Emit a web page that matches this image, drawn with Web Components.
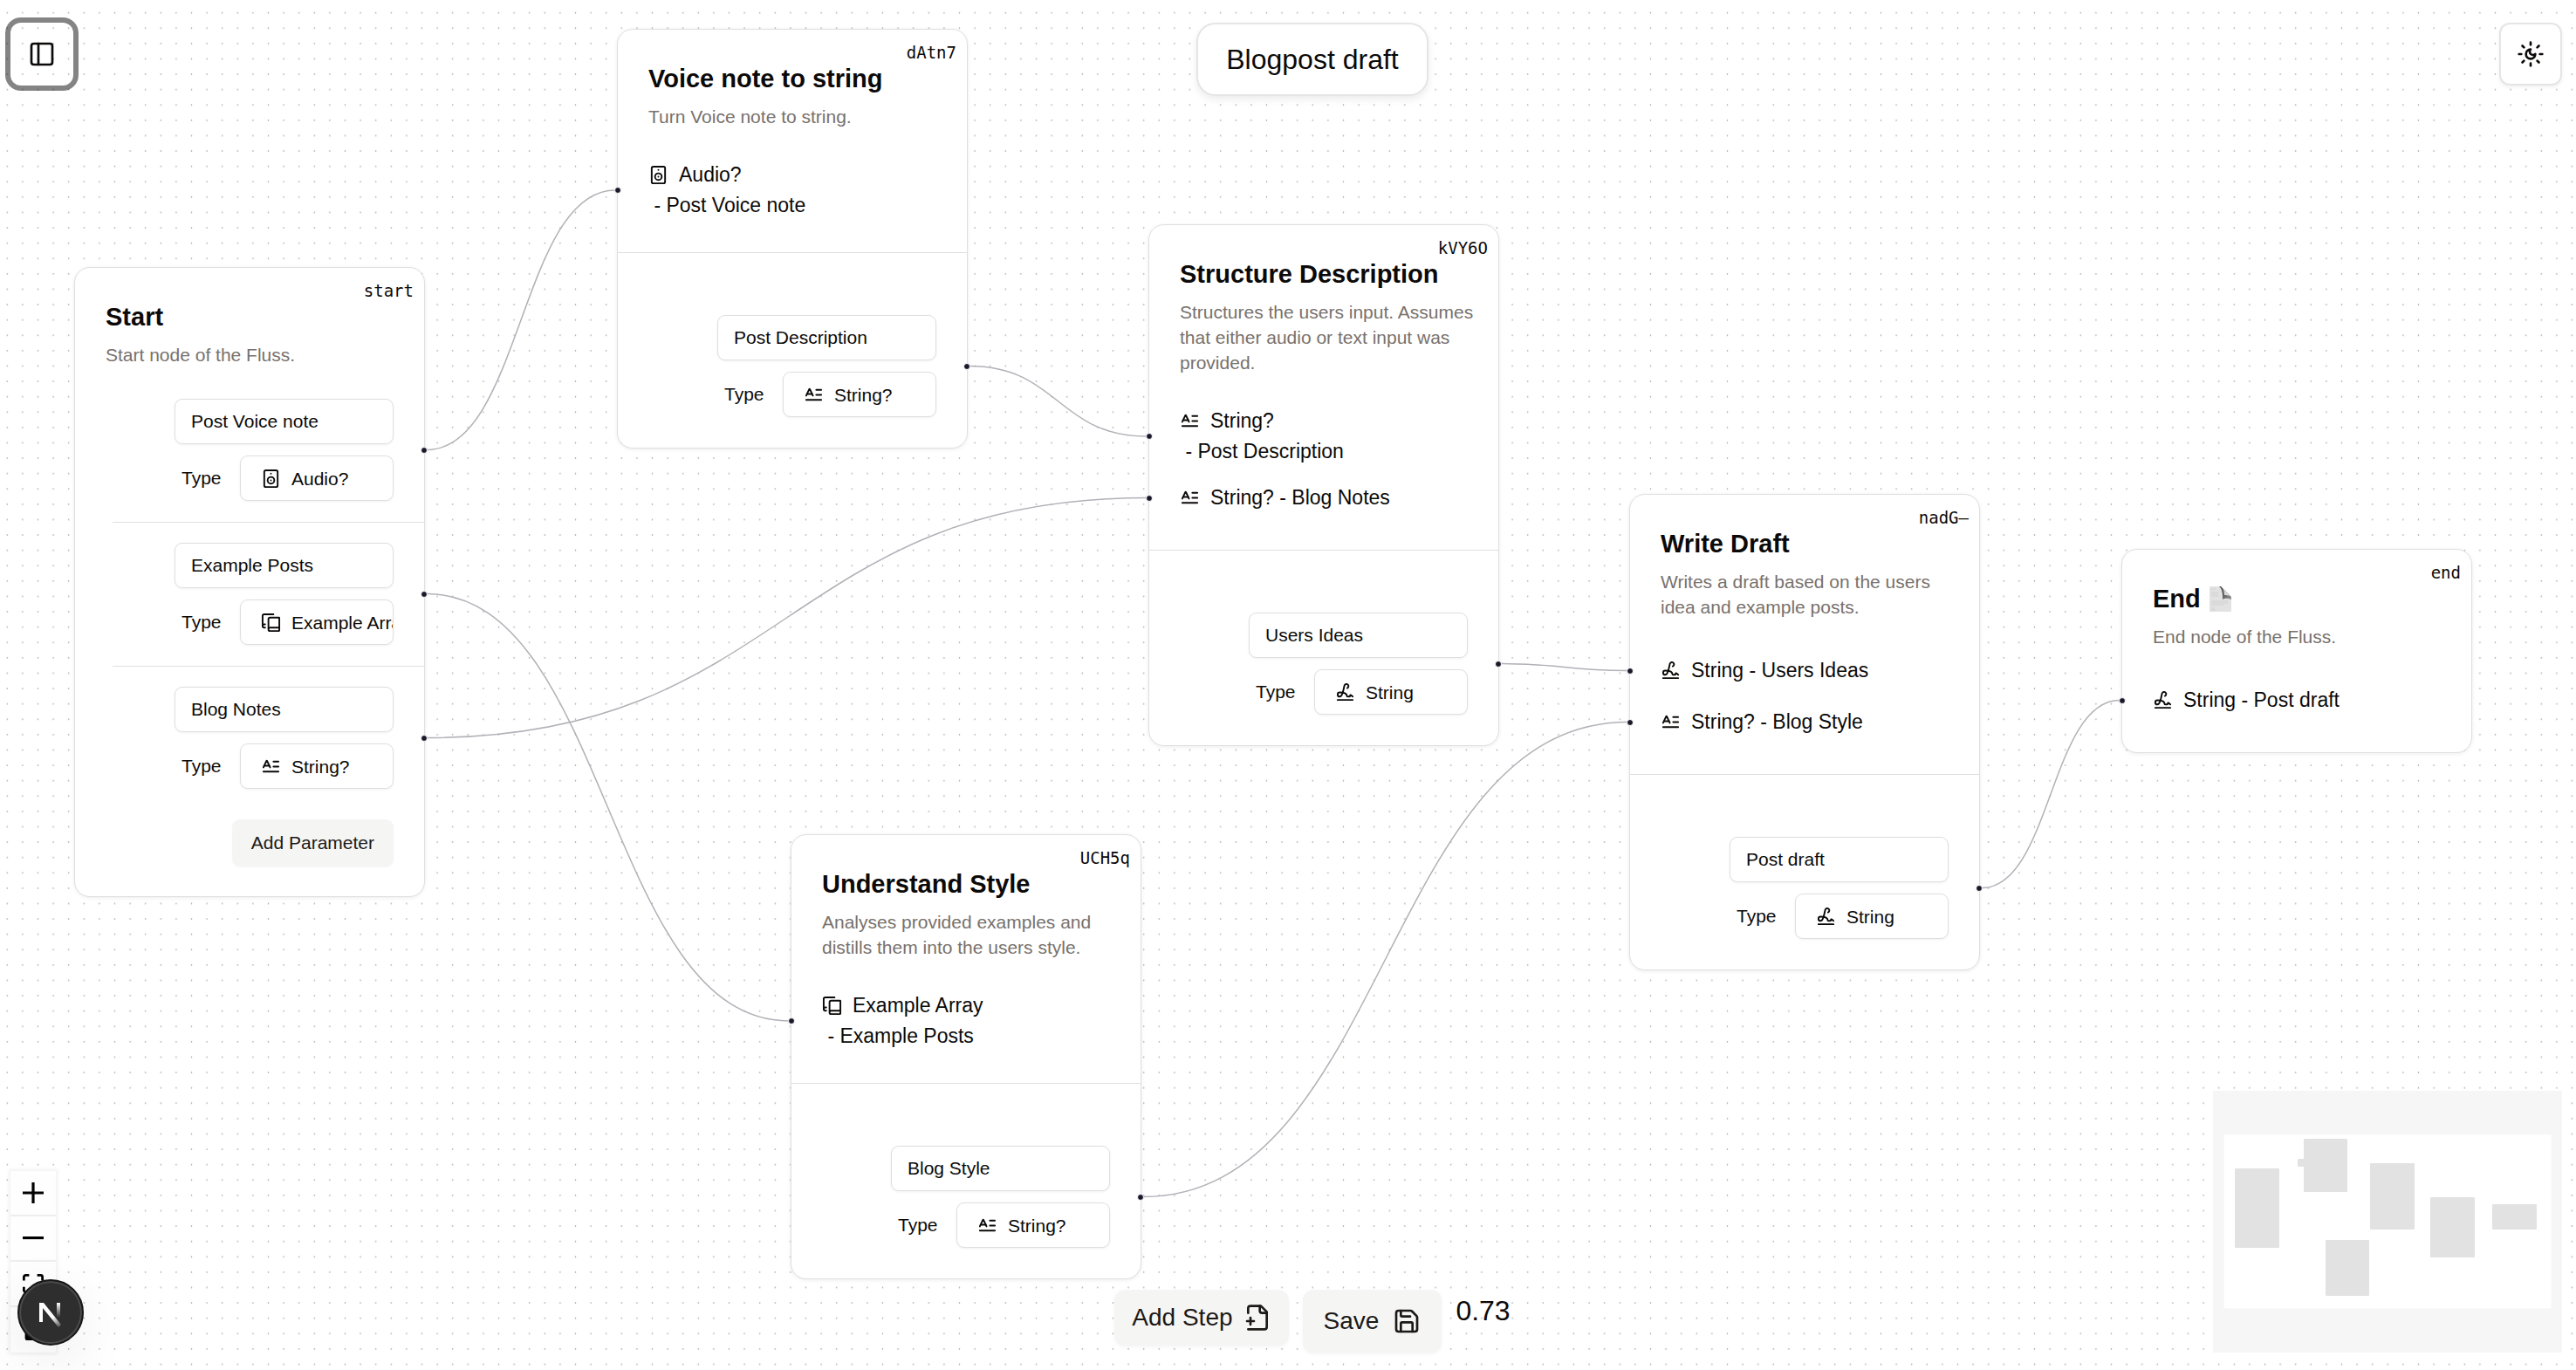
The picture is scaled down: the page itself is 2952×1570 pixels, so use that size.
<!DOCTYPE html>
<html lang="en">
<head>
<meta charset="utf-8">
<title>Blogpost draft</title>
<style>
  :root {
    --ink: #0c0a09;
    --muted: #78716c;
    --line: #e5e5e5;
    --hairline: #dfdfdf;
    --soft: #f5f5f4;
    --mono: "DejaVu Sans Mono", monospace;
  }
  html, body { height: 100%; margin: 0; }
  body {
    font-family: "Liberation Sans", Arial, sans-serif;
    color: var(--ink);
    background: #fff;
    overflow: hidden;
  }
</style>
</head>
<body>
<flow-app>
  <flow-edges slot="canvas"></flow-edges>

  <flow-node slot="canvas" x="85" y="306" name="Start" code="start">
    Start node of the Fluss.
    <flow-output slot="outputs" id="start-voice" name="Post Voice note" type="Audio?" icon="speaker"></flow-output>
    <flow-output slot="outputs" id="start-posts" name="Example Posts" type="Example Array" icon="array"></flow-output>
    <flow-output slot="outputs" id="start-notes" name="Blog Notes" type="String?" icon="text"></flow-output>
    <flow-add slot="footer">Add Parameter</flow-add>
  </flow-node>

  <flow-node slot="canvas" x="707" y="33" name="Voice note to string" code="dAtn7">
    Turn Voice note to string.
    <flow-param slot="inputs" id="voice-in" stacked type="Audio?" name="Post Voice note" icon="speaker"></flow-param>
    <flow-output slot="outputs" id="voice-out" name="Post Description" type="String?" icon="text"></flow-output>
  </flow-node>

  <flow-node slot="canvas" x="1316" y="257" name="Structure Description" code="kVY6O">
    Structures the users input. Assumes that either audio or text input was provided.
    <flow-param slot="inputs" id="structure-desc" stacked type="String?" name="Post Description" icon="text"></flow-param>
    <flow-param slot="inputs" id="structure-notes" type="String?" name="Blog Notes" icon="text"></flow-param>
    <flow-output slot="outputs" id="structure-out" name="Users Ideas" type="String" icon="signature"></flow-output>
  </flow-node>

  <flow-node slot="canvas" x="906" y="956" name="Understand Style" code="UCH5q">
    Analyses provided examples and distills them into the users style.
    <flow-param slot="inputs" id="style-in" stacked type="Example Array" name="Example Posts" icon="array"></flow-param>
    <flow-output slot="outputs" id="style-out" name="Blog Style" type="String?" icon="text"></flow-output>
  </flow-node>

  <flow-node slot="canvas" x="1867" y="566" name="Write Draft" code="nadG–">
    Writes a draft based on the users idea and example posts.
    <flow-param slot="inputs" id="write-ideas" type="String" name="Users Ideas" icon="signature"></flow-param>
    <flow-param slot="inputs" id="write-style" type="String?" name="Blog Style" icon="text"></flow-param>
    <flow-output slot="outputs" id="write-out" name="Post draft" type="String" icon="signature"></flow-output>
  </flow-node>

  <flow-node slot="canvas" x="2431" y="629" name="End" code="end" emblem>
    End node of the Fluss.
    <flow-param slot="inputs" id="end-in" type="String" name="Post draft" icon="signature"></flow-param>
  </flow-node>

  <flow-icon-button slot="menu" ring icon="panel" label="Toggle sidebar"></flow-icon-button>
  <flow-title slot="title">Blogpost draft</flow-title>
  <flow-icon-button slot="theme" icon="sunmoon" label="Toggle theme"></flow-icon-button>
  <flow-controls slot="controls"></flow-controls>
  <flow-toolbar slot="toolbar" zoom="0.73"></flow-toolbar>
  <flow-minimap slot="minimap"></flow-minimap>
  <dev-badge slot="badge"></dev-badge>
</flow-app>

<script>
const ICONS = {
  panel: '<rect width="18" height="18" x="3" y="3" rx="2"/><path d="M9 3v18"/>',
  sunmoon: '<path d="M12 8a2.83 2.83 0 0 0 4 4 4 4 0 1 1-4-4"/><path d="M12 2v2"/><path d="M12 20v2"/><path d="m4.9 4.9 1.4 1.4"/><path d="m17.7 17.7 1.4 1.4"/><path d="M2 12h2"/><path d="M20 12h2"/><path d="m6.3 17.7-1.4 1.4"/><path d="m19.1 4.9-1.4 1.4"/>',
  speaker: '<rect width="16" height="20" x="4" y="2" rx="2"/><path d="M12 6h.01"/><circle cx="12" cy="14" r="4"/><path d="M12 14h.01"/>',
  array: '<path d="M2 16V4a2 2 0 0 1 2-2h11"/><path d="M22 18H11a2 2 0 1 0 0 4h10.5a.5.5 0 0 0 .5-.5v-15a.5.5 0 0 0-.5-.5H11a2 2 0 0 0-2 2v12"/><path d="M5 14H4a2 2 0 1 0 0 4h1"/>',
  text: '<path d="M15 12h6"/><path d="M15 6h6"/><path d="m3 13 3.553-7.724a.5.5 0 0 1 .894 0L11 13"/><path d="M3 18h18"/><path d="M4 11h6"/>',
  signature: '<path d="m21 17-2.156-1.868A.5.5 0 0 0 18 15.5v.5a1 1 0 0 1-1 1h-2a1 1 0 0 1-1-1c0-2.545-3.991-3.97-8.5-4a1 1 0 0 0 0 5c4.153 0 4.745-11.295 5.708-13.5a2.5 2.5 0 1 1 3.31 3.284"/><path d="M3 21h18"/>',
  fileplus: '<path d="M4 22h14a2 2 0 0 0 2-2V7l-5-5H6a2 2 0 0 0-2 2v4"/><path d="M14 2v4a2 2 0 0 0 2 2h4"/><path d="M3 15h6"/><path d="M6 12v6"/>',
  save: '<path d="M15.2 3a2 2 0 0 1 1.4.6l3.8 3.8a2 2 0 0 1 .6 1.4V19a2 2 0 0 1-2 2H5a2 2 0 0 1-2-2V5a2 2 0 0 1 2-2z"/><path d="M17 21v-7a1 1 0 0 0-1-1H8a1 1 0 0 0-1 1v7"/><path d="M7 3v4a1 1 0 0 0 1 1h7"/>'
};
const icon = (name, size) =>
  `<svg width="${size}" height="${size}" viewBox="0 0 24 24" fill="none" stroke="currentColor" stroke-width="2" stroke-linecap="round" stroke-linejoin="round" aria-hidden="true">${ICONS[name]}</svg>`;

const BASE = `
  *, *::before, *::after { box-sizing: border-box; }
  button, input, select { font: inherit; color: inherit; margin: 0; }
  svg { display: block; flex: none; }
`;
const HANDLE = `
  .handle {
    position: absolute; top: 50%; width: 8px; height: 8px; margin-top: -4px;
    border: 1px solid #fff; border-radius: 50%; background: #1a192b;
  }
`;

class FlowElement extends HTMLElement {
  connectedCallback() {
    if (this.shadowRoot) return;
    this.attachShadow({ mode: 'open' }).innerHTML = `<style>${BASE}${this.css()}</style>${this.html()}`;
    this.ready();
  }
  css() { return ''; }
  html() { return ''; }
  ready() {}
  attr(name) { return this.getAttribute(name) || ''; }
}

customElements.define('flow-app', class extends FlowElement {
  css() { return `
    :host { display: block; position: relative; width: 100%; height: 100%; overflow: hidden; }
    .dots { position: absolute; inset: 0; width: 100%; height: 100%; }
    .canvas { position: absolute; inset: 0; }
    .overlay {
      --rail: 60px;
      position: absolute; inset: 0; pointer-events: none;
      display: grid; grid-template-columns: 1fr auto 1fr; grid-template-rows: auto 1fr;
      padding: 26px 16px 20px 12px;
    }
    .overlay ::slotted(*) { pointer-events: auto; }
    .centre { display: flex; justify-content: center; margin-left: var(--rail); }
    .end { justify-self: end; }
    .bottom { align-self: end; }
    .badge { position: absolute; left: 20px; bottom: 28px; }
  `; }
  html() { return `
    <svg class="dots" aria-hidden="true">
      <pattern id="grid" width="17.6" height="17.6" patternUnits="userSpaceOnUse">
        <circle cx="8.3" cy="14.7" r="0.8" fill="#91919a"/>
      </pattern>
      <rect width="100%" height="100%" fill="url(#grid)"/>
    </svg>
    <main class="canvas"><slot name="canvas"></slot></main>
    <div class="overlay">
      <div><slot name="menu"></slot></div>
      <div class="centre"><slot name="title"></slot></div>
      <div class="end"><slot name="theme"></slot></div>
      <div class="bottom"><slot name="controls"></slot></div>
      <div class="centre bottom"><slot name="toolbar"></slot></div>
      <div class="end bottom"><slot name="minimap"></slot></div>
    </div>
    <div class="badge"><slot name="badge"></slot></div>
  `; }
});

customElements.define('flow-node', class extends FlowElement {
  css() { return `
    :host {
      display: flex; flex-direction: column; position: absolute; width: 402px; box-sizing: border-box;
      padding: 36px 35px 0; border: 1px solid var(--hairline); border-radius: 18px; background: #fff;
      box-shadow: 0 1px 4px rgba(0, 0, 0, .08);
    }
    .code { position: absolute; top: 13px; right: 12px; font: 19px/26px var(--mono); }
    h2 { display: flex; align-items: center; gap: 10px; margin: 0 0 8px; font-size: 29px; line-height: 41px; font-weight: 700; white-space: nowrap; }
    p { margin: 0 -8px 0 0; font-size: 21px; line-height: 29px; color: var(--muted); }
    .inputs { display: flex; flex-direction: column; margin: 0 -35px; padding: 29px 0 30px; }
    .outputs { display: flex; flex-direction: column; margin: 0 -35px; padding-bottom: 35px; }
    .inputs + .outputs { border-top: 1px solid var(--hairline); padding-top: 71px; }
    .outputs.list { padding-top: 36px; }
    .footer { align-self: flex-end; padding-bottom: 34px; }
  `; }
  html() {
    const has = s => this.querySelector(`[slot="${s}"]`);
    const page = `<svg width="26" height="30" viewBox="0 0 26 30" role="img" aria-label="Page">
      <defs><linearGradient id="fold" x1="0" y1="0" x2="1" y2="1"><stop offset="0" stop-color="#444"/><stop offset=".6" stop-color="#6a6a6a"/><stop offset="1" stop-color="#999"/></linearGradient></defs>
      <path d="M0 0h13l12 12v17H0z" fill="#e2e2e2"/>
      <path d="M11 0c4 3 4 9 4 15 3-2 6-1 10 0v-3L13 0z" fill="url(#fold)"/>
      <path d="M14 1l10 10c-3-1-5-1-7-1 0-4-1-7-3-9z" fill="#d8d8d8"/>
      <path d="M2 3h5M2 7h8M2 9h8M2 11h9M2 17h19M2 19h19M2 21h14M2 25h4M2 27h5" stroke="#cfcfcf" stroke-width=".8"/>
    </svg>`;
    return `
      <span class="code">${this.attr('code')}</span>
      <h2>${this.attr('name')}${this.hasAttribute('emblem') ? page : ''}</h2>
      <p><slot></slot></p>
      ${has('inputs') ? '<div class="inputs"><slot name="inputs"></slot></div>' : ''}
      ${has('outputs') ? `<div class="outputs${has('inputs') ? '' : ' list'}"><slot name="outputs"></slot></div>` : ''}
      ${has('footer') ? '<div class="footer"><slot name="footer"></slot></div>' : ''}
    `;
  }
  ready() {
    this.style.left = this.attr('x') + 'px';
    this.style.top = this.attr('y') + 'px';
  }
});

customElements.define('flow-param', class extends FlowElement {
  css() { return `
    :host {
      display: flex; align-items: center; position: relative; box-sizing: border-box;
      min-height: 59px; padding: 6px 35px; font-size: 23px; line-height: 35px; white-space: pre;
    }
    :host([stacked]) { flex-direction: column; align-items: flex-start; }
    .type { display: flex; align-items: center; gap: 12px; }
    .handle { left: -4px; }
    ${HANDLE}
  `; }
  html() { return `<span class="handle"></span><span class="type">${icon(this.attr('icon'), 23)}<span>${this.attr('type')}</span></span><span> - ${this.attr('name')}</span>`; }
});

customElements.define('flow-output', class extends FlowElement {
  css() { return `
    :host { display: block; position: relative; font-size: 21px; }
    :host(:not(:first-of-type)) { margin-top: 24px; padding-top: 24px; }
    :host(:not(:first-of-type))::before {
      content: ""; position: absolute; top: 0; left: 43px; right: 0; height: 1px; background: var(--hairline);
    }
    .group { display: flex; flex-direction: column; gap: 13px; position: relative; padding: 0 35px 0 114px; }
    input, .select {
      height: 52px; border: 1px solid var(--hairline); border-radius: 9px; background: #fff;
      box-shadow: 0 1px 3px rgba(0, 0, 0, .06);
    }
    input { width: 100%; padding: 0 18px; outline: 0; }
    .row { display: flex; align-items: center; }
    label { flex: 1; padding-left: 8px; }
    .select { display: flex; align-items: center; gap: 12px; width: 176px; padding-left: 23px; overflow: hidden; }
    select { appearance: none; flex: none; height: 50px; padding: 0; border: 0; background: none; outline: 0; }
    .handle { right: -4px; }
    ${HANDLE}
  `; }
  html() { return `
    <div class="group">
      <span class="handle"></span>
      <input type="text" aria-label="Parameter name" value="${this.attr('name')}">
      <div class="row">
        <label for="type">Type</label>
        <div class="select">${icon(this.attr('icon'), 23)}<select id="type"><option>${this.attr('type')}</option></select></div>
      </div>
    </div>
  `; }
  anchor() { return this.shadowRoot.querySelector('.group').getBoundingClientRect(); }
});

customElements.define('flow-add', class extends FlowElement {
  css() { return `
    :host { display: block; }
    button { height: 54px; padding: 0 22px; border: 0; border-radius: 9px; background: var(--soft); font-size: 21px; color: #1c1917; box-shadow: 0 1px 2px rgba(0, 0, 0, .04); }
  `; }
  html() { return `<button type="button"><slot></slot></button>`; }
});

customElements.define('flow-icon-button', class extends FlowElement {
  css() { return `
    :host { display: block; }
    button {
      display: flex; align-items: center; justify-content: center; width: 72px; height: 72px; padding: 0;
      border: 2px solid var(--line); border-radius: 12px; background: #fff; box-shadow: 0 2px 4px rgba(0, 0, 0, .06);
    }
    :host([ring]) button { border-color: transparent; background: none; box-shadow: 0 0 0 6px rgba(10, 10, 10, .5); }
  `; }
  html() { return `<button type="button" aria-label="${this.attr('label')}">${icon(this.attr('icon'), 32)}</button>`; }
});

customElements.define('flow-title', class extends FlowElement {
  css() { return `
    :host { display: block; }
    h1 {
      margin: 0; padding: 16px 32px; border: 2px solid var(--line); border-radius: 22px; background: #fff;
      font-size: 32px; line-height: 48px; font-weight: 400; white-space: nowrap;
      box-shadow: 0 4px 8px rgba(0, 0, 0, .08);
    }
  `; }
  html() { return `<h1><slot></slot></h1>`; }
});

customElements.define('flow-toolbar', class extends FlowElement {
  css() { return `
    :host { display: flex; align-items: flex-start; gap: 16px; }
    button {
      display: flex; align-items: center; gap: 12px; padding: 16px 20px; border: 0; border-radius: 12px;
      background: var(--soft); color: #1c1917; font-size: 28px; line-height: 32px; white-space: nowrap;
      box-shadow: 0 2px 4px rgba(0, 0, 0, .04);
    }
    button.large { gap: 16px; padding: 20px 24px; }
    output { font-size: 32px; line-height: 48px; }
  `; }
  html() { return `
    <button type="button">Add Step${icon('fileplus', 32)}</button>
    <button type="button" class="large">Save${icon('save', 32)}</button>
    <output>${this.attr('zoom')}</output>
  `; }
});

customElements.define('flow-controls', class extends FlowElement {
  css() { return `
    :host { display: flex; flex-direction: column; width: 52px; box-shadow: 0 0 4px 2px rgba(0, 0, 0, .06); }
    button { display: flex; align-items: center; justify-content: center; height: 52px; padding: 0; border: 0; border-bottom: 2px solid #eee; background: #fefefe; }
    button:last-child { border-bottom: 0; }
    svg { width: 24px; max-height: 24px; }
  `; }
  html() { return `
    <button type="button" aria-label="Zoom in"><svg viewBox="0 0 32 32"><path d="M32 18.133H18.133V32h-4.266V18.133H0v-4.266h13.867V0h4.266v13.867H32z"/></svg></button>
    <button type="button" aria-label="Zoom out"><svg viewBox="0 0 32 5"><path d="M0 0h32v4.2H0z"/></svg></button>
    <button type="button" aria-label="Fit view"><svg viewBox="0 0 32 30"><path d="M3.692 4.63c0-.53.4-.938.939-.938h5.215V0H4.708C2.13 0 0 2.054 0 4.63v5.216h3.692V4.631zM27.354 0h-5.2v3.692h5.17c.53 0 .984.4.984.939v5.215H32V4.631A4.624 4.624 0 0 0 27.354 0zm.954 24.83c0 .532-.4.94-.939.94h-5.215v3.768h5.215c2.577 0 4.631-2.13 4.631-4.707v-5.139h-3.692v5.139zm-23.677.94a.919.919 0 0 1-.939-.94v-5.138H0v5.139c0 2.577 2.13 4.707 4.708 4.707h5.138V25.77H4.631z"/></svg></button>
    <button type="button" aria-label="Lock"><svg viewBox="0 0 25 32"><path d="M21.333 10.667H19.81V7.619C19.81 3.429 16.38 0 12.19 0 8 0 4.571 3.429 4.571 7.619v3.048H3.048A3.056 3.056 0 0 0 0 13.714v15.238A3.056 3.056 0 0 0 3.048 32h18.285a3.056 3.056 0 0 0 3.048-3.048V13.714a3.056 3.056 0 0 0-3.048-3.047zM12.19 24.533a3.056 3.056 0 0 1-3.047-3.047 3.056 3.056 0 0 1 3.047-3.048 3.056 3.056 0 0 1 3.048 3.048 3.056 3.056 0 0 1-3.048 3.047zm4.724-13.866H7.467V7.619c0-2.59 2.133-4.724 4.723-4.724 2.591 0 4.724 2.133 4.724 4.724v3.048z"/></svg></button>
  `; }
});

customElements.define('flow-minimap', class extends FlowElement {
  css() { return `:host { display: block; width: 400px; }`; }
  html() { return `
    <svg width="400" height="300" viewBox="0 0 400 300" role="img" aria-label="Mini map">
      <rect width="400" height="300" fill="#f6f6f6"/>
      <rect x="12.6" y="50.4" width="375" height="199" fill="#fff"/>
      <g fill="#e2e2e2">
        <rect x="25" y="89" width="51" height="91" rx="1"/>
        <rect x="97" y="78" width="10" height="9" rx="1"/>
        <rect x="104" y="55" width="50" height="61" rx="1"/>
        <rect x="180" y="83" width="51" height="76" rx="1"/>
        <rect x="129" y="171" width="50" height="64" rx="1"/>
        <rect x="249" y="122" width="51" height="69" rx="1"/>
        <rect x="320" y="130" width="51" height="29" rx="1"/>
      </g>
    </svg>
  `; }
});

customElements.define('dev-badge', class extends FlowElement {
  css() { return `
    :host { display: block; }
    button {
      display: block; width: 76px; height: 76px; padding: 0; border: 2px solid #171717; border-radius: 50%;
      background: #2e2e2e; box-shadow: inset 0 0 0 2px #4b4b4b, 0 16px 64px rgba(0, 0, 0, .08);
    }
  `; }
  html() { return `
    <button type="button" aria-label="Open developer tools">
      <svg width="72" height="72" viewBox="0 0 72 72">
        <defs>
          <linearGradient id="diagonal" gradientUnits="userSpaceOnUse" x1="38" y1="42" x2="48" y2="55"><stop stop-color="#fff"/><stop offset="1" stop-color="#fff" stop-opacity="0"/></linearGradient>
          <linearGradient id="stem" x1="0" y1="0" x2="0" y2="1"><stop stop-color="#fff"/><stop offset="1" stop-color="#fff" stop-opacity="0"/></linearGradient>
        </defs>
        <path d="M23 25h5l20 25-3 3-18-22v16h-4z" fill="url(#diagonal)"/>
        <rect x="43" y="25" width="4" height="17" fill="url(#stem)"/>
      </svg>
    </button>
  `; }
});

customElements.define('flow-edges', class extends FlowElement {
  css() { return `
    :host { display: block; position: absolute; inset: 0; pointer-events: none; }
    svg { width: 100%; height: 100%; }
    path { fill: none; stroke: #b1b1b7; stroke-width: 1.5; }
  `; }
  html() { return `<svg aria-hidden="true"></svg>`; }
  ready() {
    this.draw();
    new ResizeObserver(() => this.draw()).observe(this);
  }
  draw() {
    const links = [
      ['start-voice', 'voice-in'], ['start-posts', 'style-in'], ['start-notes', 'structure-notes'],
      ['voice-out', 'structure-desc'], ['structure-out', 'write-ideas'],
      ['style-out', 'write-style'], ['write-out', 'end-in']
    ];
    const origin = this.getBoundingClientRect();
    this.shadowRoot.querySelector('svg').innerHTML = links.map(([from, to]) => {
      const a = document.getElementById(from).anchor();
      const b = document.getElementById(to).getBoundingClientRect();
      const x1 = a.right + 3 - origin.left, y1 = a.top + a.height / 2 - origin.top;
      const x2 = b.left - 3 - origin.left, y2 = b.top + b.height / 2 - origin.top;
      const mid = (x1 + x2) / 2;
      return `<path d="M${x1} ${y1}C${mid} ${y1} ${mid} ${y2} ${x2} ${y2}"/>`;
    }).join('');
  }
});
</script>
</body>
</html>
